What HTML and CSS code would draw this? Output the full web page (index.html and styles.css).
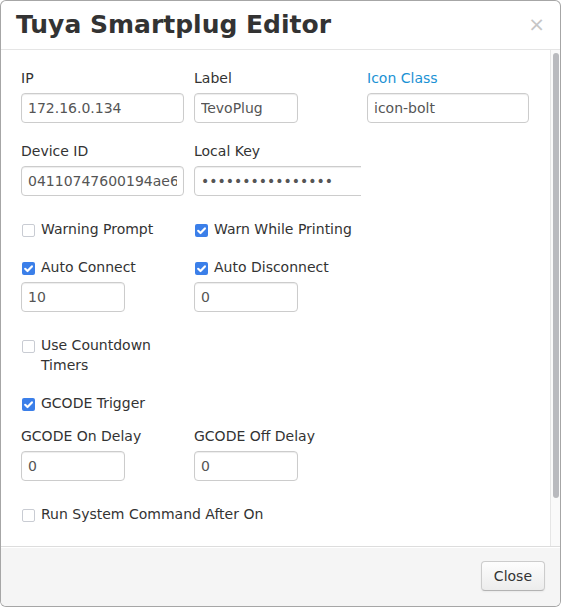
FILE: index.html
```html
<!DOCTYPE html>
<html>
<head>
<meta charset="utf-8">
<title>Tuya Smartplug Editor</title>
<link rel="stylesheet" href="styles.css">
</head>
<body>
<div class="modal">
  <div class="modal-header">
    <h3>Tuya Smartplug Editor</h3>
    <span class="close">×</span>
  </div>
  <div class="modal-body">
    <div class="content">
      <div class="row">
        <div class="cell"><span class="lbl">IP</span><input class="inp w-wide" type="text" value="172.16.0.134"></div>
        <div class="cell"><span class="lbl">Label</span><input class="inp w-short" type="text" value="TevoPlug"></div>
        <div class="cell"><span class="lbl link">Icon Class</span><input class="inp w-icon" type="text" value="icon-bolt"></div>
      </div>
      <div class="row gap18">
        <div class="cell"><span class="lbl">Device ID</span><input class="inp w-wide" type="text" value="04110747600194ae6e2a"></div>
        <div class="cell"><span class="lbl">Local Key</span><div class="clip"><input class="inp w-over" type="password" value="abcdefghijklmnop"></div></div>
        <div class="cell"></div>
      </div>
      <div class="row gap23">
        <div class="cell chk"><span class="cb"></span><span>Warning Prompt</span></div>
        <div class="cell chk"><span class="cb on"><svg viewBox="0 0 13 13" width="13" height="13"><path d="M3.2 6.8 L5.5 9 L9.9 4.4" fill="none" stroke="#fff" stroke-width="2.2" stroke-linecap="round" stroke-linejoin="round"/></svg></span><span>Warn While Printing</span></div>
        <div class="cell"></div>
      </div>
      <div class="row gap18">
        <div class="cell">
          <div class="chk lblgap"><span class="cb on"><svg viewBox="0 0 13 13" width="13" height="13"><path d="M3.2 6.8 L5.5 9 L9.9 4.4" fill="none" stroke="#fff" stroke-width="2.2" stroke-linecap="round" stroke-linejoin="round"/></svg></span><span>Auto Connect</span></div>
          <input class="inp w-short" type="text" value="10">
        </div>
        <div class="cell">
          <div class="chk lblgap"><span class="cb on"><svg viewBox="0 0 13 13" width="13" height="13"><path d="M3.2 6.8 L5.5 9 L9.9 4.4" fill="none" stroke="#fff" stroke-width="2.2" stroke-linecap="round" stroke-linejoin="round"/></svg></span><span>Auto Disconnect</span></div>
          <input class="inp w-short" type="text" value="0">
        </div>
        <div class="cell"></div>
      </div>
      <div class="row gap23">
        <div class="cell chk"><span class="cb"></span><span>Use Countdown Timers</span></div>
        <div class="cell"></div>
        <div class="cell"></div>
      </div>
      <div class="row gap18">
        <div class="cell chk"><span class="cb on"><svg viewBox="0 0 13 13" width="13" height="13"><path d="M3.2 6.8 L5.5 9 L9.9 4.4" fill="none" stroke="#fff" stroke-width="2.2" stroke-linecap="round" stroke-linejoin="round"/></svg></span><span>GCODE Trigger</span></div>
        <div class="cell"></div>
        <div class="cell"></div>
      </div>
      <div class="row gap13">
        <div class="cell"><span class="lbl">GCODE On Delay</span><input class="inp w-short" type="text" value="0"></div>
        <div class="cell"><span class="lbl">GCODE Off Delay</span><input class="inp w-short" type="text" value="0"></div>
        <div class="cell"></div>
      </div>
      <div class="line gap23">
        <div class="chk"><span class="cb"></span><span>Run System Command After On</span></div>
      </div>
    </div>
    <div class="scrollbar"><div class="thumb"></div></div>
  </div>
  <div class="modal-footer">
    <button class="btn" type="button">Close</button>
  </div>
</div>
</body>
</html>
```

FILE: styles.css
```css
html, body {
  margin: 0;
  padding: 0;
  background: #fff;
}
body {
  font-family: "DejaVu Sans", sans-serif;
  font-size: 14px;
  line-height: 20px;
  color: #333;
}
.modal {
  width: 561px;
  box-sizing: border-box;
  border: 1px solid rgba(0, 0, 0, 0.35);
  border-radius: 6px;
  background: #fff;
  overflow: hidden;
}
.modal-header {
  display: flex;
  justify-content: space-between;
  align-items: center;
  padding: 9px 15px;
  border-bottom: 1px solid #e5e5e5;
}
.modal-header h3 {
  margin: 0;
  font-size: 25px;
  line-height: 30px;
  font-weight: bold;
  color: #333;
}
.close {
  font-size: 20px;
  line-height: 20px;
  color: #c6c6c6;
  margin-top: -2px;
}
.modal-body {
  height: 496px;
  display: flex;
  overflow: hidden;
}
.content {
  flex: 1;
  padding: 18px 0 0 20px;
  overflow: hidden;
}
.scrollbar {
  flex: none;
  width: 10px;
  border-left: 1px solid #e6e6e6;
  background: #fafafa;
  padding: 3px 1px 48px 2px;
  box-sizing: border-box;
  display: flex;
}
.thumb {
  flex: 1;
  background: #b9babe;
  border-radius: 4px;
}
.row {
  display: grid;
  grid-template-columns: 167px 167px 167px;
  column-gap: 6px;
}
.gap13 { margin-top: 13px; }
.gap18 { margin-top: 18px; }
.gap23 { margin-top: 23px; }
.lbl {
  display: block;
  margin-bottom: 5px;
}
.lbl.link {
  color: #1b92d4;
}
.inp {
  display: block;
  box-sizing: border-box;
  height: 30px;
  padding: 4px 6px;
  margin: 0;
  font-family: "DejaVu Sans", sans-serif;
  font-size: 14px;
  line-height: 20px;
  color: #555;
  background: #fff;
  border: 1px solid #ccc;
  border-radius: 4px;
  box-shadow: inset 0 1px 1px rgba(0, 0, 0, 0.075);
  outline: none;
}
.w-wide { width: 163px; }
.w-short { width: 104px; }
.w-icon { width: 162px; }
.w-over { width: 220px; }
.clip {
  width: 167px;
  overflow: hidden;
}
.chk {
  display: flex;
  align-items: flex-start;
  gap: 6px;
}
.lblgap {
  margin-bottom: 5px;
}
.cb {
  flex: none;
  box-sizing: border-box;
  width: 13px;
  height: 13px;
  margin: 5px 0 0 1px;
  border: 1px solid #c9ccd3;
  border-radius: 2px;
  background: #fff;
  display: flex;
}
.cb.on {
  border: none;
  background: #3b7fe9;
}
.cb svg {
  display: block;
}
.modal-footer {
  display: flex;
  justify-content: flex-end;
  padding: 14px 15px 15px;
  background: #f5f5f5;
  border-top: 1px solid #ddd;
  box-shadow: inset 0 1px 0 #fff;
}
.btn {
  box-sizing: border-box;
  height: 30px;
  padding: 4px 12px;
  font-family: "DejaVu Sans", sans-serif;
  font-size: 14px;
  line-height: 20px;
  color: #333;
  border: 1px solid #ccc;
  border-bottom-color: #b3b3b3;
  border-radius: 4px;
  background: linear-gradient(#fdfdfd, #ececec);
  box-shadow: inset 0 1px 0 rgba(255, 255, 255, 0.2), 0 1px 2px rgba(0, 0, 0, 0.05);
}
```
